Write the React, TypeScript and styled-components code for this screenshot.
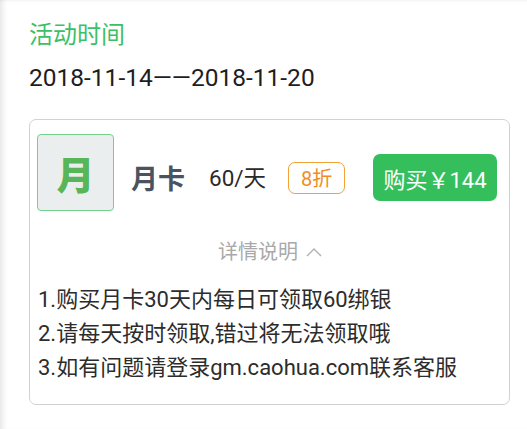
import React from "react";
import styled, { createGlobalStyle } from "styled-components";

const Global = createGlobalStyle`
  html, body { margin: 0; padding: 0; background: #ffffff; }
  body { font-family: Roboto, "Noto Sans CJK SC", sans-serif; }
  * { box-sizing: border-box; }
`;

const Page = styled.div`
  width: 527px;
  height: 429px;
  padding: 18px 17px 0 29px;
  background: #ffffff;
  box-shadow: inset 7px 0 6px -5px rgba(0, 0, 0, 0.12), inset 0 3px 3px -2px rgba(0, 0, 0, 0.05);
  overflow: hidden;
`;

const Title = styled.div`
  font-size: 24px;
  line-height: 34px;
  color: #3dbf68;
`;

const DateLine = styled.div`
  margin-top: 9px;
  font-size: 24.5px;
  line-height: 34px;
  color: #1e1e1e;
`;

const Card = styled.div`
  margin-top: 24px;
  width: 481px;
  border: 1.5px solid #d2d2d2;
  border-radius: 7px;
  padding: 14px 12px 19px 7px;
`;

const Header = styled.div`
  display: flex;
  align-items: center;
`;

const IconBox = styled.div`
  width: 77px;
  height: 77px;
  flex: none;
  border: 1.5px solid #74d08c;
  border-radius: 4px;
  background: #ebeeee;
  display: flex;
  align-items: center;
  justify-content: center;
  font-family: "Noto Sans CJK SC", sans-serif;
  font-weight: 900;
  font-size: 38px;
  color: #58b659;
`;

const Info = styled.div`
  display: flex;
  align-items: center;
  flex: 1;
  padding-top: 10px;
`;

const Name = styled.div`
  margin-left: 17px;
  font-family: "Noto Sans CJK SC", sans-serif;
  font-weight: 700;
  font-size: 27px;
  line-height: 34px;
  color: #4a5460;
`;

const Price = styled.div`
  margin-left: 24px;
  font-size: 22.5px;
  line-height: 30px;
  color: #2a2a2a;
`;

const Badge = styled.div`
  margin-left: 22px;
  width: 57px;
  height: 32px;
  border: 1.5px solid #f3a035;
  border-radius: 7px;
  display: flex;
  align-items: center;
  justify-content: center;
  font-size: 20px;
  color: #ef8d22;
`;

const BuyButton = styled.button`
  margin-left: auto;
  width: 124px;
  height: 47px;
  border: none;
  border-radius: 7px;
  background: #35bf5c;
  color: #ffffff;
  font-family: Roboto, "Noto Sans CJK SC", sans-serif;
  font-size: 22px;
  display: flex;
  align-items: center;
  justify-content: center;
  padding: 0;
`;

const Toggle = styled.div`
  margin-top: 26px;
  display: flex;
  align-items: center;
  justify-content: center;
  gap: 8px;
  font-size: 20px;
  line-height: 30px;
  color: #a9a9a9;
  padding-left: 6px;
`;

const Rules = styled.div`
  margin-top: 16px;
  padding-left: 1px;
`;

const Rule = styled.div`
  font-size: 22px;
  line-height: 34px;
  color: #2c2c2c;
  white-space: nowrap;
`;

const rules = [
  "1.购买月卡30天内每日可领取60绑银",
  "2.请每天按时领取,错过将无法领取哦",
  "3.如有问题请登录gm.caohua.com联系客服",
];

export default function App() {
  return (
    <>
      <Global />
      <Page>
        <Title>活动时间</Title>
        <DateLine>2018-11-14——2018-11-20</DateLine>
        <Card>
          <Header>
            <IconBox>月</IconBox>
            <Info>
              <Name>月卡</Name>
              <Price>60/天</Price>
              <Badge>8折</Badge>
              <BuyButton>购买￥144</BuyButton>
            </Info>
          </Header>
          <Toggle>
            <span>详情说明</span>
            <svg width="16" height="10" viewBox="0 0 16 10">
              <polyline points="1,9 8,2 15,9" fill="none" stroke="#b0b0b0" strokeWidth="1.4" />
            </svg>
          </Toggle>
          <Rules>
            {rules.map((r) => (
              <Rule key={r}>{r}</Rule>
            ))}
          </Rules>
        </Card>
      </Page>
    </>
  );
}
